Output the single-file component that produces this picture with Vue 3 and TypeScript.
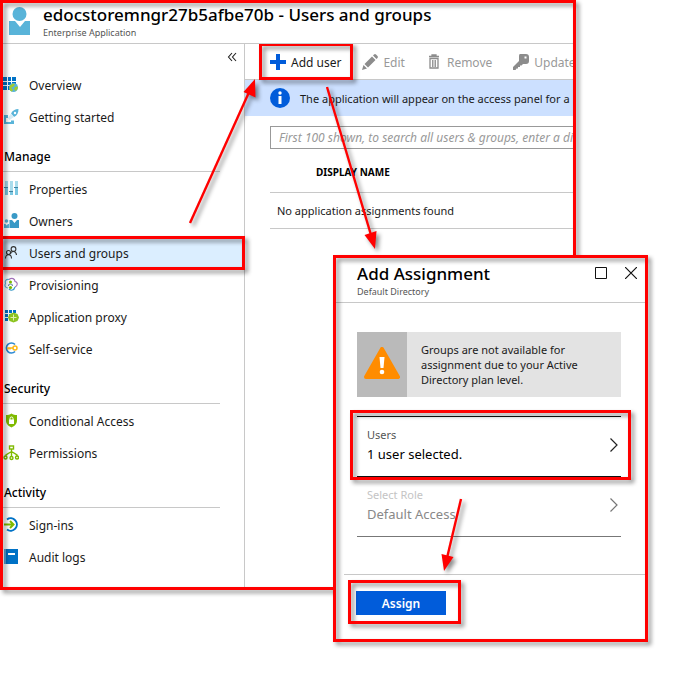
<script setup lang="ts">
import { ref } from 'vue'

interface NavItem {
  id: string
  label: string
}
interface NavGroup {
  title: string
  items: NavItem[]
}

const groups: NavGroup[] = [
  {
    title: '',
    items: [
      { id: 'overview', label: 'Overview' },
      { id: 'start', label: 'Getting started' },
    ],
  },
  {
    title: 'Manage',
    items: [
      { id: 'properties', label: 'Properties' },
      { id: 'owners', label: 'Owners' },
      { id: 'users', label: 'Users and groups' },
      { id: 'provisioning', label: 'Provisioning' },
      { id: 'proxy', label: 'Application proxy' },
      { id: 'self', label: 'Self-service' },
    ],
  },
  {
    title: 'Security',
    items: [
      { id: 'conditional', label: 'Conditional Access' },
      { id: 'permissions', label: 'Permissions' },
    ],
  },
  {
    title: 'Activity',
    items: [
      { id: 'signins', label: 'Sign-ins' },
      { id: 'audit', label: 'Audit logs' },
    ],
  },
]

const active = ref('users')
const search = ref('')
</script>

<template>
  <div class="page">
    <main class="blade">
      <header class="blade-head">
        <svg class="app-icon" viewBox="0 0 22 28" aria-hidden="true">
          <circle cx="10.500" cy="7" r="7" fill="#59b4d9" />
          <path d="M0 14h6l5 6 5-6h5v14H0z" fill="#59b4d9" />
        </svg>
        <div class="titles">
          <h1>edocstoremngr27b5afbe70b - Users and groups</h1>
          <p>Enterprise Application</p>
        </div>
      </header>

      <div class="blade-body">
        <nav class="sidebar">
          <button class="collapse" aria-label="Collapse menu">
            <svg viewBox="0 0 10 10"><path d="M5 1 1.500 5 5 9M9 1 5.500 5 9 9" fill="none" stroke="#222" stroke-width="1.100" /></svg>
          </button>
          <section v-for="g in groups" :key="g.title" class="group">
            <h2 v-if="g.title">{{ g.title }}</h2>
            <a
              v-for="item in g.items"
              :key="item.id"
              href="#"
              class="nav-item"
              :class="{ active: active === item.id }"
              @click.prevent="active = item.id"
            >
              <svg class="nav-icon" viewBox="0 0 16 16" aria-hidden="true">
                <g v-if="item.id === 'overview'">
                  <path d="M0 0h4v4H0zM5 0h3v4H5zM9 0h4v4H9zM0 5h4v3H0zM5 5h3v3H5zM9 5h4v3H9zM0 9h4v4H0zM5 9h3v4H5z" fill="#0072c6" />
                  <circle cx="10.500" cy="10.500" r="4.500" fill="#59b4d9" />
                  <path d="M7 8.500 10 6.500l2 1-2 2.500-2 .5 2 2.500-1 1.500C6.500 14 5.500 11 7 8.500zM12 10l3-.5c0 2-1 3.500-2.500 4.500L11 12z" fill="#a3cc2c" />
                </g>
                <g v-else-if="item.id === 'start'">
                  <path d="M1 6h4v3H3v4h5v-1.500h3V15H1z" fill="#59b4d9" />
                  <path d="M15.500 0C12 0 9.500 1.500 8 4.500L11 8C14 6.500 15.500 4 15.500 0z" fill="#59b4d9" />
                  <path d="M8 4.500 5 9l1.500 2L11 8z" fill="#d4ebf5" />
                  <circle cx="12" cy="4" r="1.200" fill="#fff" />
                </g>
                <g v-else-if="item.id === 'properties'">
                  <path d="M2 0h3v14H2zM7 0h3v14H7zM12 0h3v14h-3z" fill="#a9dcec" />
                  <path d="M2 7h3v7H2zM7 11h3v3H7zM12 7h3v7h-3z" fill="#7cc8e2" />
                  <path d="M1 6h4v1H1zM6 10h4v1H6zM11 6h4v1h-4z" fill="#3e83a3" />
                </g>
                <g v-else-if="item.id === 'owners'">
                  <circle cx="11.500" cy="3" r="3" fill="#3999c6" />
                  <path d="M6.500 7H9l2.500 3L14 7h2v8H6.500z" fill="#3999c6" />
                  <circle cx="3.500" cy="8" r="1.800" fill="#59b4d9" />
                  <path d="M1 11h1.500l1 1.500L5 11h1v4H1z" fill="#59b4d9" />
                </g>
                <g v-else-if="item.id === 'users'" fill="none" stroke="#333" stroke-width="1.100">
                  <circle cx="10.500" cy="4" r="2.400" />
                  <path d="M7.500 9c.5-3.500 5.500-3.500 6 1" />
                  <circle cx="5.500" cy="7.500" r="2" />
                  <path d="M2.500 13.500c0-5 6-5 6 0" />
                </g>
                <g v-else-if="item.id === 'provisioning'" fill="none" stroke-width="1.100">
                  <path d="M6 2.500C3 2 1.500 4 2.500 6.500 1 8.500 2.500 11 5 11" stroke="#59b4d9" />
                  <path d="M6 2.500c3-2.500 6-.5 6 2 3 .5 3 4.500 0 5.500" stroke="#a070b8" />
                  <path d="M12 10c-1 3.500-4 4-6 2" stroke="#3999c6" />
                  <path d="M5.500 9a2 2 0 0 1 4 0" stroke="#68a" />
                  <circle cx="7.500" cy="5" r="1.500" fill="#7fba00" stroke="none" />
                  <circle cx="7.500" cy="10.500" r="1.600" fill="#7fba00" stroke="none" />
                </g>
                <g v-else-if="item.id === 'proxy'">
                  <path d="M2 1h3v3H2zM6 1h3v3H6zM10 1h3v3h-3zM2 5h3v3H2zM6 5h3v3H6zM2 9h3v3H2z" fill="#0072c6" />
                  <path d="m10.500 3.500 4 1.500 1.500 3.500-1.500 3.500-4 1.500-4-1.500L5 8.500 6.500 5z" fill="#8cc420" />
                  <path d="M10.500 5.500v6M7.500 8.500h6" stroke="#dff0b0" fill="none" />
                </g>
                <g v-else-if="item.id === 'self'">
                  <path d="M12 3.500A5 5 0 1 0 12 10.500" fill="none" stroke="#2b88d0" stroke-width="1.700" />
                  <circle cx="12" cy="7" r="2" fill="#fff" stroke="#fcb714" stroke-width="1.500" />
                  <path d="M10 7H5v1.500M7 7v1.500" fill="none" stroke="#fcb714" stroke-width="1.500" />
                </g>
                <g v-else-if="item.id === 'conditional'">
                  <path d="M8.500.5C10 2 12 2 14 2v5.500c0 4-3.500 6-5.500 7-2-1-5.500-3-5.500-7V2c2 0 4 0 5.500-1.500z" fill="#7fba00" />
                  <path d="M6 6.500h5V11H6z" fill="#fff" />
                  <path d="M7 7V5.500a1.500 1.500 0 0 1 3 0V7" fill="none" stroke="#fff" />
                </g>
                <g v-else-if="item.id === 'permissions'" fill="none" stroke="#7fba00" stroke-width="1.400">
                  <rect x="6.500" y="1" width="4" height="3" />
                  <path d="M8.500 4v7M3 11V10L8.500 6.500 14 10v1" />
                  <circle cx="2.500" cy="12.500" r="1.500" /><circle cx="8.500" cy="13" r="1.500" /><circle cx="14" cy="12.500" r="1.500" />
                </g>
                <g v-else-if="item.id === 'signins'">
                  <path d="M4 2.500A6.200 6.200 0 1 1 4 12.500" fill="none" stroke="#0072c6" stroke-width="2" />
                  <path d="M1 7.500h9M7 4l3.500 3.500L7 11" fill="none" stroke="#7fba00" stroke-width="2" />
                </g>
                <g v-else>
                  <path d="M1 0h14v15H1z" fill="#0072c6" />
                  <path d="M1 0h2v15H1z" fill="#59a5da" />
                  <path d="M5 4h7v2H5z" fill="#fff" />
                </g>
              </svg>
              <span>{{ item.label }}</span>
              <i v-if="item.id === 'users'" class="mark mark-nav"></i>
            </a>
          </section>
        </nav>

        <div class="content">
          <div class="toolbar">
            <button class="tool add">
              <svg viewBox="0 0 16 16"><path d="M6 0h4v6h6v4h-6v6H6v-6H0V6h6z" fill="#015cda" /></svg>
              <span>Add user</span>
              <i class="mark mark-add"></i>
            </button>
            <button class="tool" disabled>
              <svg viewBox="0 0 16 16"><path d="m0 16 1.500-5 3.500 3.500zM2.500 10 10 2.500 13.500 6 6 13.500zM11 1.500l1-1q1-.8 2 0L15.500 2q.8 1 0 2l-1 1z" fill="#8c8c8c" /></svg>
              <span>Edit</span>
            </button>
            <button class="tool" disabled>
              <svg viewBox="0 0 16 16"><path d="M3 2.500h10M6 2V1h4v1M4 4.500h8V14H4z" fill="none" stroke="#8c8c8c" stroke-width="1.300" /><path d="M6.500 6v7M8 6v7M9.500 6v7" stroke="#8c8c8c" stroke-width=".9" /></svg>
              <span>Remove</span>
            </button>
            <button class="tool" disabled>
              <svg viewBox="0 0 16 16"><path d="M7 0h6q3 0 3 3v4q0 3-3 3h-3L8.500 11.500H7V13H5v1.500H3.500L2.500 16H0v-3l6-6V2q0-2 1-2zM11.500 2.500v2h2v-2z" fill="#8c8c8c" fill-rule="evenodd" /></svg>
              <span>Update</span>
            </button>
          </div>
          <div class="notice">
            <svg viewBox="0 0 20 20" aria-hidden="true">
              <circle cx="10" cy="10" r="10" fill="#015cda" />
              <path d="M8.500 8h3v8h-3z" fill="#fff" /><circle cx="10" cy="5" r="1.700" fill="#fff" />
            </svg>
            <span>The application will appear on the access panel for a</span>
          </div>
          <div class="listing">
            <input v-model="search" aria-label="Search users and groups" placeholder="First 100 shown, to search all users &amp; groups, enter a disp" />
            <table>
              <thead><tr><th scope="col">DISPLAY NAME</th></tr></thead>
              <tbody><tr><td>No application assignments found</td></tr></tbody>
            </table>
          </div>
        </div>
      </div>
      <i class="mark mark-frame"></i>
    </main>

    <section class="dialog" role="dialog" aria-labelledby="dialog-title">
      <header class="dialog-head">
        <div class="titles">
          <h2 id="dialog-title">Add Assignment</h2>
          <p>Default Directory</p>
        </div>
        <div class="window-buttons">
          <button aria-label="Maximize"><svg viewBox="0 0 12 12"><path d="M.5.5h11v11H.5z" fill="none" stroke="#111" /></svg></button>
          <button aria-label="Close"><svg viewBox="0 0 12 12"><path d="m0 0 12 12M12 0 0 12" fill="none" stroke="#111" stroke-width="1.200" /></svg></button>
        </div>
      </header>
      <div class="dialog-body">
        <div class="warning">
          <div class="warning-icon">
            <svg viewBox="0 0 36 32" aria-hidden="true">
              <path d="M18 2 34 30H2z" fill="#ff8c00" stroke="#ff8c00" stroke-width="4" stroke-linejoin="round" />
              <path d="M15.500 10h5l-1 11h-3z" fill="#fff" /><circle cx="18" cy="25" r="2.300" fill="#fff" />
            </svg>
          </div>
          <p>Groups are not available for assignment due to your Active Directory plan level.</p>
        </div>
        <button class="picker">
          <span class="picker-text"><small>Users</small><span>1 user selected.</span></span>
          <svg viewBox="0 0 8 14"><path d="m.5.5 6.500 6.500-6.500 6.500" fill="none" stroke="#222" stroke-width="1.200" /></svg>
          <i class="mark mark-users"></i>
        </button>
        <button class="picker" disabled>
          <span class="picker-text"><small>Select Role</small><span>Default Access</span></span>
          <svg viewBox="0 0 8 14"><path d="m.5.5 6.500 6.500-6.500 6.500" fill="none" stroke="#777" stroke-width="1.200" /></svg>
        </button>
      </div>
      <footer>
        <button class="assign">Assign<i class="mark mark-assign"></i></button>
      </footer>
      <i class="mark mark-frame"></i>
    </section>

    <svg class="arrows" width="674" height="686" aria-hidden="true">
      <g fill="none" stroke="#f00" stroke-width="2.400">
        <path d="M190 223 250 90" />
        <path d="M327 87 371 235" />
        <path d="M461 499 447 558" />
      </g>
      <g fill="#f00">
        <path d="M255 79 255.500 97.500 243.500 92z" />
        <path d="M375 249 364.500 235 376.500 231z" />
        <path d="M444 571 441.500 554 453.500 557z" />
      </g>
    </svg>
  </div>
</template>

<style>
body {
  margin: 0;
  background: #fff;
}
</style>

<style scoped>
* {
  box-sizing: border-box;
}
.page {
  position: relative;
  min-height: 686px;
  padding-right: 98px;
  font-family: 'Noto Sans', 'Open Sans', sans-serif;
  font-size: 12px;
  line-height: 20px;
  color: #1a1a1a;
}
h1, h2, p {
  margin: 0;
  font-weight: 400;
}
button {
  margin: 0;
  padding: 0;
  border: 0;
  background: none;
  font: inherit;
  color: inherit;
  text-align: left;
}
svg {
  display: block;
  flex: none;
}
.mark {
  position: absolute;
  border: 3px solid #f00;
  filter: drop-shadow(3px 3px 2px rgba(0, 0, 0, 0.45));
  pointer-events: none;
  z-index: 2;
}
.mark-frame {
  inset: 0;
}
.blade {
  position: relative;
  padding: 3px;
}
.blade-head {
  display: flex;
  height: 41px;
  padding: 2px 6px 0;
  gap: 12px;
  border-bottom: 1px solid #c8c8c8;
}
.app-icon {
  width: 22px;
  height: 28px;
  margin-top: 2px;
}
.titles h1, .titles h2 {
  font-size: 17px;
  font-weight: 500;
  line-height: 20px;
  color: #000;
  white-space: nowrap;
}
.titles p {
  font-size: 9px;
  line-height: 16px;
  color: #555;
}
.blade-body {
  display: flex;
}
.sidebar {
  flex: none;
  width: 242px;
  padding-bottom: 14px;
  border-right: 1px solid #c8c8c8;
}
.collapse {
  display: block;
  width: 10px;
  height: 25px;
  margin-left: auto;
  margin-right: 7px;
}
.collapse svg {
  width: 10px;
  height: 10px;
}
.group h2 {
  width: 217px;
  margin-bottom: 1px;
  padding: 14px 0 4px 1px;
  border-bottom: 1px solid #c8c8c8;
  font-size: 12px;
  font-weight: 500;
  color: #000;
}
.nav-item {
  position: relative;
  display: flex;
  align-items: center;
  gap: 10px;
  height: 32px;
  color: inherit;
  text-decoration: none;
}
.nav-item span, .tool span {
  padding-top: 2px;
}
.nav-item.active {
  background: #dbeeff;
}
.nav-icon {
  width: 16px;
  height: 16px;
}
.mark-nav {
  inset: -1px -1px -1px -3px;
}
.content {
  flex: 1;
  min-width: 0;
  overflow: hidden;
}
.toolbar {
  display: flex;
  align-items: center;
  height: 36px;
  padding-left: 25px;
  gap: 21px;
  border-bottom: 1px solid #c8c8c8;
  white-space: nowrap;
}
.tool {
  display: flex;
  align-items: center;
  gap: 5px;
}
.tool:disabled {
  color: #999;
}
.tool svg {
  width: 16px;
  height: 16px;
}
.add {
  position: relative;
}
.mark-add {
  inset: -8px -12px -7px -11px;
}
.notice {
  display: flex;
  align-items: center;
  gap: 10px;
  height: 36px;
  padding-left: 25px;
  background: #cce0ff;
  font-size: 11px;
  white-space: nowrap;
}
.notice span {
  padding-top: 2px;
}
.notice svg {
  width: 20px;
  height: 20px;
}
.listing {
  padding: 10px 0 0 25px;
}
.listing input {
  display: block;
  width: calc(100% + 40px);
  height: 23px;
  padding: 0 8px;
  border: 1px solid #999;
  border-radius: 0;
  font: inherit;
}
.listing input::placeholder {
  font-style: italic;
  color: #999;
}
table {
  width: 100%;
  border-collapse: collapse;
}
th, td {
  border-bottom: 1px solid #c8c8c8;
  text-align: left;
}
th {
  height: 43px;
  padding: 4px 0 0 46px;
  font-size: 10px;
  font-weight: 700;
  color: #000;
}
td {
  height: 36px;
  padding: 2px 0 0 7px;
  font-size: 11px;
}
.dialog {
  position: absolute;
  top: 255px;
  right: 26px;
  width: 315px;
  padding: 3px;
  background: #fff;
  z-index: 3;
}
.dialog-head {
  display: flex;
  justify-content: space-between;
  height: 45px;
  padding: 6px 8px 0 21px;
  border-bottom: 1px solid #c8c8c8;
}
.window-buttons {
  display: flex;
  gap: 18px;
  height: 18px;
  align-items: center;
}
.window-buttons svg {
  width: 12px;
  height: 12px;
}
.dialog-body {
  padding: 29px 24px 37px 21px;
}
.warning {
  display: flex;
  margin-bottom: 19px;
  background: #e3e3e3;
}
.warning-icon {
  display: flex;
  flex: none;
  align-items: center;
  justify-content: center;
  width: 50px;
  padding-bottom: 4px;
  background: #bababa;
}
.warning-icon svg {
  width: 36px;
  height: 32px;
}
.warning p {
  padding: 10px 14px;
  font-size: 11px;
  line-height: 15px;
}
.picker {
  position: relative;
  display: flex;
  align-items: center;
  justify-content: space-between;
  width: 100%;
  height: 60px;
  padding: 0 3px 4px 10px;
  border-bottom: 1px solid #111;
}
.warning + .picker {
  height: 61px;
  border-top: 1px solid #111;
}
.picker-text {
  display: flex;
  flex-direction: column;
  font-size: 13px;
  color: #000;
}
.picker small {
  font-size: 11px;
  line-height: 18px;
  color: #555;
}
.picker:disabled {
  border-color: #777;
}
.picker:disabled .picker-text {
  color: #888;
}
.picker:disabled small {
  color: #c4c4c4;
}
.picker svg {
  width: 8px;
  height: 14px;
}
.mark-users {
  inset: -7px -10px -4px -7px;
}
footer {
  margin-left: 8px;
  padding: 16px 12px 24px;
  border-top: 1px solid #c8c8c8;
}
.assign {
  position: relative;
  display: block;
  width: 90px;
  height: 24px;
  padding-top: 2px;
  background: #015cda;
  color: #fff;
  font-weight: 600;
  text-align: center;
}
.mark-assign {
  inset: -11px -15px -9px -8px;
}
.arrows {
  position: absolute;
  top: 0;
  left: 0;
  z-index: 4;
  pointer-events: none;
  filter: drop-shadow(3px 3px 2px rgba(0, 0, 0, 0.45));
}
</style>
